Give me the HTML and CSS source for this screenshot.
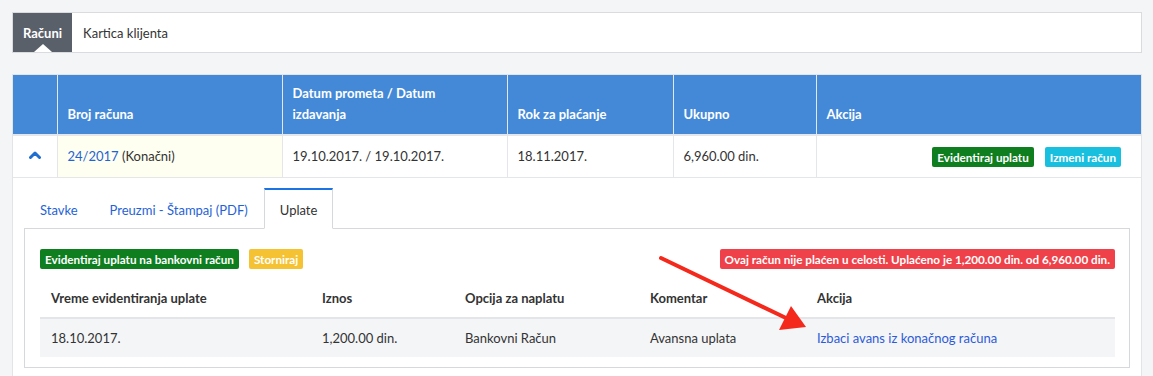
FILE: index.html
```html
<!DOCTYPE html>
<html lang="sr">
<head>
<meta charset="utf-8">
<title>Računi</title>
<link rel="stylesheet" href="styles.css">
</head>
<body>
<nav class="tabbar">
  <a class="tab tab-active">Računi</a>
  <a class="tab">Kartica klijenta</a>
</nav>

<div class="invoices">
  <table class="grid">
    <colgroup>
      <col class="c1"><col class="c2"><col class="c3"><col class="c4"><col class="c5"><col class="c6">
    </colgroup>
    <thead>
      <tr>
        <th></th>
        <th>Broj računa</th>
        <th>Datum prometa / Datum<br>izdavanja</th>
        <th>Rok za plaćanje</th>
        <th>Ukupno</th>
        <th>Akcija</th>
      </tr>
    </thead>
    <tbody>
      <tr class="main-row">
        <td class="toggle"><svg width="12" height="8" viewBox="0 0 12 8"><polyline points="1.5,6.5 6,2 10.5,6.5" fill="none" stroke="#1f6fd0" stroke-width="3" stroke-linecap="round" stroke-linejoin="round"/></svg></td>
        <td class="hl"><a class="link">24/2017</a> (Konačni)</td>
        <td>19.10.2017. / 19.10.2017.</td>
        <td>18.11.2017.</td>
        <td>6,960.00 din.</td>
        <td class="actions"><span class="btn btn-green">Evidentiraj uplatu</span><span class="btn btn-cyan">Izmeni račun</span></td>
      </tr>
      <tr class="detail-row">
        <td colspan="6" class="detail">
          <ul class="subtabs">
            <li class="subtab"><a class="link">Stavke</a></li>
            <li class="subtab"><a class="link">Preuzmi - Štampaj (PDF)</a></li>
            <li class="subtab subtab-active">Uplate</li>
          </ul>
          <div class="panel">
            <div class="toolbar">
              <div class="tool-left">
                <span class="btn btn-green">Evidentiraj uplatu na bankovni račun</span>
                <span class="btn btn-yellow">Storniraj</span>
              </div>
              <span class="btn btn-red">Ovaj račun nije plaćen u celosti. Uplaćeno je 1,200.00 din. od 6,960.00 din.</span>
            </div>
            <table class="payments">
              <colgroup>
                <col class="p1"><col class="p2"><col class="p3"><col class="p4"><col class="p5">
              </colgroup>
              <thead>
                <tr>
                  <th>Vreme evidentiranja uplate</th>
                  <th>Iznos</th>
                  <th>Opcija za naplatu</th>
                  <th>Komentar</th>
                  <th>Akcija</th>
                </tr>
              </thead>
              <tbody>
                <tr>
                  <td>18.10.2017.</td>
                  <td>1,200.00 din.</td>
                  <td>Bankovni Račun</td>
                  <td>Avansna uplata</td>
                  <td><a class="link link-action">Izbaci avans iz konačnog računa</a></td>
                </tr>
              </tbody>
            </table>
          </div>
        </td>
      </tr>
    </tbody>
  </table>
</div>

<svg class="annotation" width="1153" height="376" viewBox="0 0 1153 376">
  <line x1="661" y1="258" x2="786" y2="318" stroke="#f4291c" stroke-width="4" stroke-linecap="round"/>
  <polygon points="806,327 779,330 791,306" fill="#f4291c"/>
</svg>
</body>
</html>
```

FILE: styles.css
```css
* { box-sizing: border-box; }

html, body {
  margin: 0;
  padding: 0;
}

body {
  background: #f4f5f7;
  font-family: Lato, "Noto Sans", sans-serif;
  font-size: 13px;
  line-height: 20px;
  color: #333;
  padding: 12px 12px 0 12px;
  width: 1153px;
  height: 376px;
  overflow: hidden;
  position: relative;
}

a { text-decoration: none; cursor: pointer; }

.link { color: #1f63d6; }
.link-action { color: #2d5bd8; }

/* top tabs */
.tabbar {
  display: flex;
  height: 41px;
  width: 1130px;
  background: #fff;
  border: 1px solid #d9dbdf;
}

.tab {
  display: flex;
  align-items: center;
  padding: 0 10px 0 11px;
  color: #333;
}

.tab-active {
  position: relative;
  background: #59606a;
  color: #fff;
  font-weight: 700;
  padding: 0 10px;
}

.tab-active::after {
  content: "";
  position: absolute;
  left: 50%;
  bottom: 0;
  margin-left: -9px;
  border-left: 9px solid transparent;
  border-right: 9px solid transparent;
  border-bottom: 8px solid #fff;
}

/* invoice table */
.invoices {
  margin-top: 21px;
  width: 1130px;
  border-top: 1px solid #e2e4e7;
  border-left: 1px solid #e2e4e7;
  border-right: 1px solid #e2e4e7;
  background: #fff;
}

.grid {
  width: 100%;
  border-collapse: collapse;
  table-layout: fixed;
}

.c1 { width: 44px; }
.c2 { width: 225px; }
.c3 { width: 225px; }
.c4 { width: 166px; }
.c5 { width: 143px; }
.c6 { width: auto; }

.grid > thead th {
  background: #4389d8;
  color: #fff;
  font-weight: 700;
  text-align: left;
  vertical-align: bottom;
  padding: 8px 10px 9px;
  line-height: 21px;
  border-left: 1px solid #e4e7eb;
  border-bottom: 2px solid #e4e6e9;
}

.grid > thead th:first-child { border-left: 0; }

.main-row td {
  height: 42px;
  padding: 0 10px;
  border-left: 1px solid #e4e6e9;
  border-bottom: 1px solid #e4e6e9;
  vertical-align: middle;
}

.main-row td:first-child { border-left: 0; }

.main-row .toggle {
  text-align: center;
  padding: 0;
}

.toggle svg { display: block; margin: 0 auto 3px; }

.main-row .hl { background: #fefff0; }

.actions {
  text-align: right;
  padding-right: 20px !important;
}

.actions .btn + .btn { margin-left: 11px; }

.btn {
  display: inline-block;
  height: 20px;
  line-height: 20px;
  padding: 0 5px;
  border-radius: 2px;
  color: #fff;
  font-weight: 700;
  font-size: 11.7px;
  white-space: nowrap;
  vertical-align: middle;
}

.btn-green { background: #0e7e1f; }
.btn-cyan { background: #19bfdf; }
.btn-yellow { background: #f4c232; }
.btn-red { background: #ef4149; }

/* detail */
.detail {
  padding: 10px 11px 12px 11px;
}

.subtabs {
  list-style: none;
  margin: 0;
  padding: 0;
  display: flex;
  height: 41px;
  margin-bottom: -1px;
}

.subtab {
  padding: 10px 15px 8px;
  line-height: 21px;
  border: 1px solid transparent;
  border-top-width: 2px;
}

.subtab-active {
  border-color: #d6d8db;
  border-top-color: #1b73e4;
  border-bottom-color: #fff;
  background: #fff;
  color: #333;
  position: relative;
  z-index: 1;
}

.panel {
  border: 1px solid #d6d8db;
  padding: 20px 14px 10px 15px;
}

.toolbar {
  display: flex;
  justify-content: space-between;
  align-items: center;
  height: 20px;
}

.tool-left { display: flex; gap: 10px; }

.payments {
  width: 100%;
  margin-top: 10px;
  border-collapse: collapse;
  table-layout: fixed;
}

.p1 { width: 271px; }
.p2 { width: 143px; }
.p3 { width: 185px; }
.p4 { width: 167px; }
.p5 { width: auto; }

.payments th {
  text-align: left;
  font-weight: 700;
  padding: 9px 11px;
  line-height: 20px;
  color: #333;
}

.payments td {
  background: #f4f5f7;
  border-top: 2px solid #e3e5e8;
  padding: 9px 11px;
  line-height: 20px;
}

.annotation {
  position: absolute;
  left: 0;
  top: 0;
  pointer-events: none;
}
```
